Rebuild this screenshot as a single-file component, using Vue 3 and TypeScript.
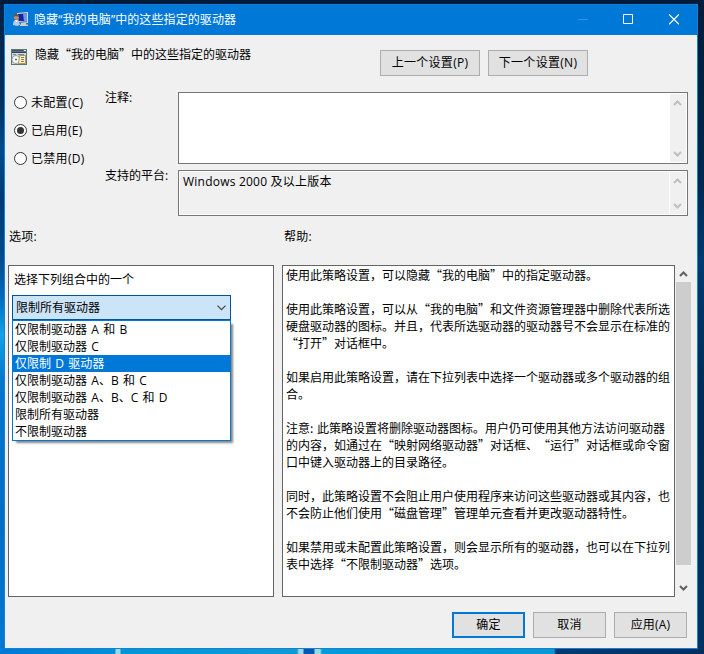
<script setup lang="ts">
import { ref } from 'vue'

const title = '隐藏“我的电脑”中的这些指定的驱动器'

interface State { label: string; value: string }
const states: State[] = [
  { label: '未配置(C)', value: 'none' },
  { label: '已启用(E)', value: 'on' },
  { label: '已禁用(D)', value: 'off' },
]
const current = ref('on')

const options: string[] = [
  '仅限制驱动器 A 和 B',
  '仅限制驱动器 C',
  '仅限制 D 驱动器',
  '仅限制驱动器 A、B 和 C',
  '仅限制驱动器 A、B、C 和 D',
  '限制所有驱动器',
  '不限制驱动器',
]
const highlighted = ref(2)
const selected = ref('限制所有驱动器')

const help: string[] = [
  '使用此策略设置，可以隐藏“我的电脑”中的指定驱动器。',
  '',
  '使用此策略设置，可以从“我的电脑”和文件资源管理器中删除代表所选',
  '硬盘驱动器的图标。并且，代表所选驱动器的驱动器号不会显示在标准的',
  '“打开”对话框中。',
  '',
  '如果启用此策略设置，请在下拉列表中选择一个驱动器或多个驱动器的组',
  '合。',
  '',
  '注意: 此策略设置将删除驱动器图标。用户仍可使用其他方法访问驱动器',
  '的内容，如通过在“映射网络驱动器”对话框、“运行”对话框或命令窗',
  '口中键入驱动器上的目录路径。',
  '',
  '同时，此策略设置不会阻止用户使用程序来访问这些驱动器或其内容，也',
  '不会防止他们使用“磁盘管理”管理单元查看并更改驱动器特性。',
  '',
  '如果禁用或未配置此策略设置，则会显示所有的驱动器，也可以在下拉列',
  '表中选择“不限制驱动器”选项。',
]

function pick(i: number) {
  highlighted.value = i
  selected.value = options[i]
}
</script>

<template>
  <div class="desktop">
    <div class="window">
      <header class="titlebar">
        <svg class="app-icon" width="16" height="16" viewBox="0 0 16 16">
          <path d="M4 1l11-1v11L5 10z" fill="#dcdcd6" />
          <path d="M5 2l9-.8v8.500L5.500 9z" fill="#1526a0" />
          <path d="M10 1.600l4-.4v8.500l-3-.2z" fill="#6f96ee" />
          <path d="M8 11h5v1.500h2V14H7v-1.500h1z" fill="#cfcbbe" />
          <circle cx="3.300" cy="5.300" r="2.500" fill="#bf9066" />
          <path d="M.6 5Q.8 2 3.200 2T6 5L3 4z" fill="#735336" />
          <path d="M0 13Q0 8 3 8t4 5l-3 1z" fill="#b9cbd8" />
          <path d="M2 8l1.500 2L5 8.300z" fill="#fff" />
        </svg>
        <h1 class="caption">{{ title }}</h1>
        <div class="controls">
          <svg width="10" height="11" viewBox="0 0 10 11"><path d="M0 5.500h10" stroke="#3394e1" /></svg>
          <svg class="maximize" width="10" height="11" viewBox="0 0 10 11"><path d="M.5.500h9v9h-9z" fill="none" stroke="#fff" /></svg>
          <svg width="10" height="11" viewBox="0 0 10 11"><path d="M0 .3l10 10M10 .3l-10 10" stroke="#fff" stroke-width="1.200" /></svg>
        </div>
      </header>

      <section class="heading">
        <svg class="policy-icon" width="16" height="16" viewBox="0 0 16 16">
          <path d="M0 0h16v16H0z" fill="#5d7779" />
          <path d="M1 1h11v1H1z" fill="#3f565a" />
          <path d="M13 1h2v1h-2z" fill="#e8eeee" />
          <path d="M1 3h14v1H1z" fill="#2c3a86" />
          <path d="M1 4h14v11H1z" fill="#d5dbd9" />
          <path d="M2 5h3v1H2zM7 5h6v1H7z" fill="#75898b" />
          <circle cx="5" cy="10.500" r="4" fill="#fafafa" stroke="#93a3a5" />
          <circle cx="5" cy="10.500" r="1" fill="#56696b" />
          <path d="M8.500 6.500h6v8h-7z" fill="#faf2c4" stroke="#a79a68" />
          <path d="M10 8.500h3M10 10.500h3M10 12.500h3" stroke="#8a7d4d" />
        </svg>
        <div class="policy-name">{{ title }}</div>
        <button class="btn nav">上一个设置(P)</button>
        <button class="btn nav">下一个设置(N)</button>
      </section>

      <section class="settings">
        <div class="radios">
          <label v-for="s in states" :key="s.value" class="radio" @click="current = s.value">
            <svg width="13" height="13" viewBox="0 0 13 13">
              <circle cx="6.500" cy="6.500" r="6" fill="#fff" stroke="#333" />
              <circle v-if="current === s.value" cx="6.500" cy="6.500" r="3.500" fill="#333" />
            </svg>
            <span>{{ s.label }}</span>
          </label>
        </div>
        <div class="fields">
          <div class="field comment">
            <span class="field-label">注释:</span>
            <div class="box">
              <div class="text"></div>
              <div class="mini-scroll">
                <svg width="9" height="6" viewBox="0 0 9 6"><path d="M1 5l3.500-3.500L8 5" /></svg>
                <svg width="9" height="6" viewBox="0 0 9 6"><path d="M1 1l3.500 3.500L8 1" /></svg>
              </div>
            </div>
          </div>
          <div class="field platform">
            <span class="field-label">支持的平台:</span>
            <div class="box">
              <div class="text">Windows 2000 及以上版本</div>
              <div class="mini-scroll">
                <svg width="9" height="6" viewBox="0 0 9 6"><path d="M1 5l3.500-3.500L8 5" /></svg>
                <svg width="9" height="6" viewBox="0 0 9 6"><path d="M1 1l3.500 3.500L8 1" /></svg>
              </div>
            </div>
          </div>
        </div>
      </section>

      <section class="labels">
        <span>选项:</span>
        <span>帮助:</span>
      </section>

      <section class="panes">
        <div class="pane options">
          <div class="prompt">选择下列组合中的一个</div>
          <div class="combo">
            <span>{{ selected }}</span>
            <svg width="9" height="6" viewBox="0 0 9 6"><path d="M.5.700l4 4 4-4" fill="none" stroke="#444" stroke-width="1.200" /></svg>
            <ul class="dropdown">
              <li v-for="(o, i) in options" :key="o" :class="{ active: i === highlighted }" @click="pick(i)">{{ o }}</li>
            </ul>
          </div>
        </div>
        <div class="pane help">
          <p v-for="(line, i) in help" :key="i">{{ line }}</p>
        </div>
        <div class="scrollbar">
          <svg width="9" height="6" viewBox="0 0 9 6"><path d="M1 5l3.500-3.500L8 5" /></svg>
          <div class="thumb"></div>
          <svg width="9" height="6" viewBox="0 0 9 6"><path d="M1 1l3.500 3.500L8 1" /></svg>
        </div>
      </section>

      <footer class="actions">
        <button class="btn primary">确定</button>
        <button class="btn">取消</button>
        <button class="btn">应用(A)</button>
      </footer>
    </div>
  </div>
</template>

<style>
body { margin: 0; overflow: hidden; }
</style>

<style scoped>
* { box-sizing: border-box; }
.desktop {
  width: 704px; height: 654px; padding: 4px 6px 5px 4px;
  background:
    linear-gradient(90deg, #0079d5 0, #0090d8 115px, #9adbe0 116px, #9adbe0 120px, #0096d6 121px, #109bd5 297px, #9adbe0 299px, #9adbe0 303px, #0757b0 304px, #0757b0 314px, #9adbe0 315px, #9adbe0 320px, #009bd8 322px, #0a98d4 554px, #023a70 556px, #002f5f 704px) 0 648px / 704px 6px no-repeat,
    linear-gradient(#001c3d, #001c3d) 0 0 / 704px 4px no-repeat,
    linear-gradient(180deg, #001b38 0, #002850 180px, #003a70 260px, #002b55 400px, #003363 654px) 697px 0 / 7px 654px no-repeat,
    linear-gradient(180deg, #002146 0, #00315f 100px, #004b8c 150px, #003b75 200px, #004b90 260px, #006fc2 300px, #12a3e8 335px, #0078d0 380px, #006cc5 520px, #0079d5 654px);
  font: 12px/17px "Open Sans", "Noto Sans", "Noto Sans CJK SC", sans-serif;
  text-spacing-trim: space-all;
  color: #000; overflow: hidden;
}
.window { width: 694px; height: 645px; background: #f0f0f0; border: 1px solid #1580d8; }
.titlebar { height: 30px; background: #0078d7; display: flex; align-items: center; padding: 0 18px 0 8px; color: #fff; }
.app-icon { margin-top: -1px; }
.caption { font-size: 12px; font-weight: 400; margin: -2px 0 0 5px; flex: 1; white-space: nowrap; letter-spacing: .1px; }
.controls { display: flex; gap: 35px; margin-top: -1px; }
.maximize { margin-right: 1px; }
.heading { display: flex; padding: 15px 0 0 6px; height: 57px; align-items: flex-start; }
.policy-icon { margin-top: -1px; }
.policy-name { width: 345px; padding-left: 8px; margin: -5px 8px 0 0; white-space: nowrap; font-family: "Noto Sans CJK SC", sans-serif; }
.btn { font: inherit; color: #000; background: #e1e1e1; border: 1px solid #adadad; width: 73px; height: 26px; padding: 0 0 1px; letter-spacing: .2px; }
.nav { width: 100px; margin-right: 8px; letter-spacing: .3px; }
.settings { display: flex; padding-left: 9px; height: 134px; }
.radios { width: 91px; padding-top: 2px; }
.radio { display: flex; align-items: center; height: 17px; margin-bottom: 11px; gap: 4px; letter-spacing: .3px; }
.fields { display: flex; flex-direction: column; gap: 6px; }
.field { display: flex; }
.field-label { width: 73px; margin-top: -3px; }
.box { width: 510px; height: 72px; display: flex; justify-content: space-between; border: 1px solid #767676; background: #fff; padding: 1px; }
.text { flex: 1; padding: 1px 3px; letter-spacing: .22px; }
.platform .box { height: 46px; }
.platform .text { background: #f0f0f0; margin-right: 1px; }
.mini-scroll { width: 16px; background: #f0f0f0; display: flex; flex-direction: column; justify-content: space-between; padding: 6px 0 5px 3px; }
.mini-scroll path { fill: none; stroke: #bfbfbf; stroke-width: 2; }
.labels { display: flex; padding: 2px 0 0 4px; height: 39px; }
.labels span { width: 275px; letter-spacing: .2px; }
.panes { display: flex; padding-left: 3px; height: 332px; }
.pane { background: #fff; border: 1px solid #646464; }
.options { width: 266px; margin-right: 8px; padding: 5px 3px; }
.prompt { padding-left: 2px; height: 24px; }
.combo { position: relative; width: 219px; height: 25px; background: #cce4f7; border: 1px solid #005499; display: flex; align-items: center; justify-content: space-between; padding: 0 4px 0 3px; }
.dropdown { position: absolute; left: -1px; top: 24px; width: 219px; height: 121px; margin: 0; padding: 0; list-style: none; background: #fff; border: 1px solid #0078d7; box-shadow: 3px 3px 2px -1px #0000007a; word-spacing: 1.200px; }
.dropdown li { height: 17px; padding-left: 2px; white-space: nowrap; }
.dropdown .active { background: #0078d7; color: #fff; }
.help { width: 393px; padding: 0 0 0 3px; font-family: "Noto Sans CJK SC", sans-serif; word-spacing: 1px; }
.help p { margin: 0; height: 17px; white-space: nowrap; }
.scrollbar { width: 15px; margin-left: 1px; display: flex; flex-direction: column; align-items: center; padding: 6px 0; }
.scrollbar path { fill: none; stroke: #606060; stroke-width: 2; }
.thumb { width: 15px; height: 283px; margin: 5px 0 auto; background: #cdcdcd; }
.actions { display: flex; justify-content: flex-end; gap: 8px; padding: 15px 10px 0 0; }
.primary { border: 2px solid #0078d7; }
</style>
